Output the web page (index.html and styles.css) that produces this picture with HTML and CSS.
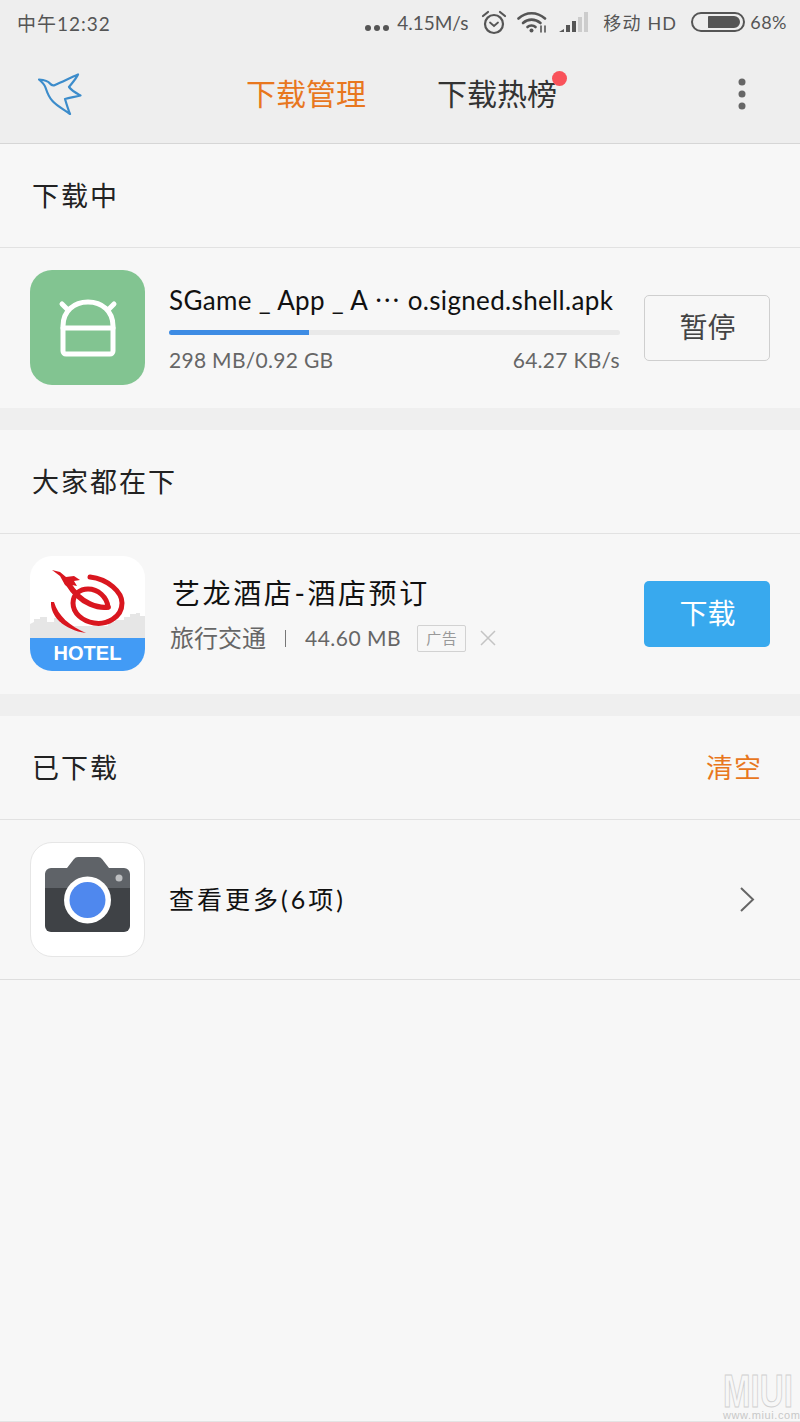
FILE: index.html
```html
<!DOCTYPE html>
<html lang="zh-CN">
<head>
  <meta charset="UTF-8">
  <meta name="viewport" content="width=device-width, initial-scale=1.0">
  <title>下载管理</title>
  <link rel="stylesheet" href="styles.css">
</head>
<body>
<div class="page">

  <header class="top">
    <div class="status">
      <div class="time">中午12:32</div>
      <div class="status-right">
        <svg class="more-dots" width="24" height="6" viewBox="0 0 24 6"><circle cx="3" cy="3" r="3"/><circle cx="12" cy="3" r="3"/><circle cx="21" cy="3" r="3"/></svg>
        <span class="speed">4.15M/s</span>
        <svg class="alarm" width="26" height="25" viewBox="0 0 26 25" fill="none" stroke="#555" stroke-linecap="round"><circle cx="13" cy="14" r="9" stroke-width="2.2"/><path d="M9 12.5l4 3.5 4-3.5" stroke-width="1.8"/><path d="M2 6l5-4M24 6l-5-4" stroke-width="2.2"/></svg>
        <svg class="wifi" width="31" height="22" viewBox="0 0 31 22" fill="none" stroke="#555" stroke-width="2.6" stroke-linecap="round"><path d="M1.5 7.5C9 0.5 20 0.5 28 7.5"/><path d="M6 12C11 7.500 18 7.500 23.500 12"/><path d="M10.500 16C12.500 14 16.500 14 18.500 16"/><circle cx="14.500" cy="19.500" r="2" fill="#555" stroke="none"/><path d="M24 15v6M28 15v6" stroke-width="1.6"/></svg>
        <svg class="signal" width="29" height="20" viewBox="0 0 29 20"><path d="M0 20l5-3v3z" fill="#555"/><rect x="7" y="13" width="4" height="7" fill="#555"/><rect x="13" y="9" width="4" height="11" fill="#555"/><rect x="19" y="5" width="4" height="15" fill="#ccc"/><rect x="25" y="0" width="4" height="20" fill="#ccc"/></svg>
        <span class="carrier">移动 HD</span>
        <div class="battery"><div class="battery-level"></div></div>
        <span class="percent">68%</span>
      </div>
    </div>
    <nav class="tabs">
      <svg class="bird" width="46" height="44" viewBox="0 0 46 44" fill="none" stroke="#3c8ccb" stroke-width="2.2" stroke-linejoin="round" stroke-linecap="round"><path d="M1 6.500C6 7 10 8 12 10.500C13.500 12.500 15 13 17 12C25 8.500 33 4.500 40 1.500C38 6 34 10 31 14C34 18 38 20 42.500 22.500C37 24 32 24.500 27 26C28.500 31 30 36 32 41C26 36.500 19 33 14.500 28C10.500 24 9 19 7.500 14.500C6.500 11.500 4 9 1 6.500Z"/></svg>
      <div class="tab tab-active">下载管理</div>
      <div class="tab tab-hot">下载热榜<span class="red-dot"></span></div>
      <svg class="menu" width="8" height="32" viewBox="0 0 8 32" fill="#666"><circle cx="4" cy="4" r="3.500"/><circle cx="4" cy="16" r="3.500"/><circle cx="4" cy="28" r="3.500"/></svg>
    </nav>
  </header>

  <section class="block">
    <div class="block-head"><h2>下载中</h2></div>
    <div class="row">
      <div class="app-icon icon-apk">
        <svg width="115" height="115" viewBox="0 0 115 115" fill="none" stroke="#fff" stroke-width="5" stroke-linecap="round" stroke-linejoin="round"><path d="M33 56C33 41 44 32 58 32C72 32 83 41 83 56V81A3 3 0 0 1 80 84H36A3 3 0 0 1 33 81Z"/><path d="M33 58H83"/><path d="M32 34L38 40M84 34L78 40"/></svg>
      </div>
      <div class="info">
        <div class="name name-file">SGame _ App _ A ⋯ o.signed.shell.apk</div>
        <div class="progress"><div class="progress-bar" style="width: 31%"></div></div>
        <div class="meta meta-split"><span>298 MB/0.92 GB</span><span>64.27 KB/s</span></div>
      </div>
      <button class="btn">暂停</button>
    </div>
  </section>

  <section class="block">
    <div class="block-head"><h2>大家都在下</h2></div>
    <div class="row">
      <div class="app-icon icon-hotel">
        <svg class="hotel-art" width="115" height="82" viewBox="0 0 115 82" fill="none">
          <path d="M0 82V68L4 66V63H10V61H17V66H24V62H30V67H38V70H78V66H85V64H94V61H100V58H106V57H110V60H115V82Z" fill="#e6e6e6"/>
          <path d="M60 21C78 23 92 36 92 47C92 62 76 69 64 67C52 65 43 57 43 47C43 38 50 33 58 33C68 33 77 41 78 51" stroke="#d9161f" stroke-width="5" stroke-linecap="round"/>
          <path d="M37 26C42 34 50 44 60 48C67 51 73 52 78 51" stroke="#d9161f" stroke-width="5.500" stroke-linecap="round"/>
          <path d="M22 14L30 16L36 21L44 20L50 24L44 25L47 30L42 29L41 33L35 29L30 20Z" fill="#d9161f"/>
          <path d="M21 46C20 60 34 74 56 77C40 70 28 60 24 46Z" fill="#d9161f"/>
        </svg>
        <div class="hotel-band">HOTEL</div>
      </div>
      <div class="info info-ad">
        <div class="name name-ad">艺龙酒店-酒店预订</div>
        <div class="meta meta-ad">
          <span class="category">旅行交通</span>
          <span class="sep"></span>
          <span class="ad-size">44.60 MB</span>
          <span class="ad-tag">广告</span>
          <svg class="close" width="16" height="16" viewBox="0 0 16 16" stroke="#c4c4c4" stroke-width="1.500"><path d="M1 1L15 15M15 1L1 15"/></svg>
        </div>
      </div>
      <button class="btn btn-blue">下载</button>
    </div>
  </section>

  <section class="block block-last">
    <div class="block-head block-head-split"><h2>已下载</h2><a class="clear">清空</a></div>
    <div class="row row-more">
      <div class="app-icon icon-camera">
        <svg width="115" height="115" viewBox="0 0 115 115">
          <path d="M15 46V32A6 6 0 0 1 21 26H37L44 17A5 5 0 0 1 48 15H68A5 5 0 0 1 72 17L79 26H94A6 6 0 0 1 100 32V46Z" fill="#5f6368"/>
          <path d="M15 46H100V84A6 6 0 0 1 94 90H21A6 6 0 0 1 15 84Z" fill="#3f4246"/>
          <circle cx="57.500" cy="58" r="23.500" fill="#fff"/>
          <circle cx="57.500" cy="58" r="18" fill="#4f88ee"/>
          <circle cx="89" cy="36" r="3.500" fill="#bdbfc1"/>
        </svg>
      </div>
      <div class="more-text">查看更多(6项)</div>
      <svg class="chevron" width="16" height="27" viewBox="0 0 16 27" fill="none" stroke="#666" stroke-width="2"><path d="M2 2L14 13.500L2 25"/></svg>
    </div>
  </section>

  <div class="watermark">
    <div class="wm-logo">MIUI</div>
    <div class="wm-url">www.miui.com</div>
  </div>

</div>
</body>
</html>
```

FILE: styles.css
```css
html, body {
  margin: 0;
  padding: 0;
}

body {
  font-family: "Lato", "Noto Sans CJK SC", sans-serif;
  background-color: #f7f7f7;
}

.page {
  position: relative;
  box-sizing: border-box;
  width: 800px;
  height: 1422px;
  overflow: hidden;
  background-color: #f7f7f7;
  border-bottom: 1px solid #e4e4e4;
}

/* top area */
.top {
  height: 143px;
  background-color: #eeeeee;
  border-bottom: 1px solid #d6d6d6;
}

.status {
  display: flex;
  justify-content: space-between;
  align-items: center;
  height: 44px;
  padding: 0 13px 0 17px;
  color: #555555;
  font-size: 19px;
}

.time {
  letter-spacing: 1px;
}

.status-right {
  display: flex;
  align-items: center;
}

.more-dots {
  fill: #555555;
  margin-top: 12px;
  margin-right: 8px;
}

.speed {
  width: 72px;
  font-size: 19px;
  margin-right: 12px;
}

.alarm {
  margin-right: 10px;
}

.wifi {
  margin-right: 11px;
}

.signal {
  margin-right: 15px;
}

.carrier {
  width: 78px;
  margin-right: 10px;
  white-space: nowrap;
  font-size: 18px;
  letter-spacing: 1.200px;
}

.battery {
  box-sizing: border-box;
  width: 54px;
  height: 20px;
  padding: 2px 3px;
  margin-right: 5px;
  border: 2px solid #555555;
  border-radius: 10px;
  display: flex;
  justify-content: flex-end;
}

.battery-level {
  width: 32px;
  background-color: #555555;
  border-radius: 1px 7px 7px 1px;
}

.percent {
  font-size: 18px;
  letter-spacing: .5px;
}

.tabs {
  display: flex;
  align-items: center;
  height: 99px;
  padding-left: 38px;
}

.bird {
  margin-right: 162px;
  margin-top: 2px;
}

.tab {
  position: relative;
  margin-top: -4px;
  font-size: 30px;
  color: #333333;
  white-space: nowrap;
}

.tab-active {
  color: #e8771e;
  margin-right: 71px;
}

.red-dot {
  position: absolute;
  top: 1px;
  right: -10px;
  width: 15px;
  height: 15px;
  border-radius: 50%;
  background-color: #f9525a;
}

.menu {
  margin-left: 181px;
}

/* sections */
.block {
  background-color: #f7f7f7;
  border-bottom: 22px solid #efefef;
}

.block-last {
  border-bottom: 1px solid #dedede;
}

.block-head {
  display: flex;
  align-items: center;
  box-sizing: border-box;
  height: 104px;
  padding: 0 38px 2px 32px;
  border-bottom: 1px solid #e2e2e2;
}

.block-head-split {
  justify-content: space-between;
}

.block-head h2 {
  margin: 0;
  font-size: 27px;
  font-weight: 400;
  letter-spacing: 2px;
  color: #222222;
}

.clear {
  font-size: 27px;
  letter-spacing: 1px;
  color: #e8771e;
}

.row {
  display: flex;
  align-items: center;
  box-sizing: border-box;
  height: 160px;
  padding: 0 30px 1px;
}

.row-more {
  height: 159px;
}

.app-icon {
  position: relative;
  flex: none;
  box-sizing: border-box;
  width: 115px;
  height: 115px;
  border-radius: 22px;
  overflow: hidden;
}

.app-icon svg {
  display: block;
}

.icon-apk {
  background-color: #82c491;
}

.icon-hotel {
  background-color: #ffffff;
}

.hotel-band {
  height: 33px;
  background-color: #429bf5;
  color: #ffffff;
  font-family: "Liberation Sans", sans-serif;
  font-weight: 700;
  font-size: 20px;
  line-height: 30px;
  text-align: center;
}

.icon-camera {
  background-color: #ffffff;
  border: 1px solid #e6e6e6;
}

.icon-camera svg {
  margin: -1px;
}

.info {
  flex: 1;
  min-width: 0;
  margin-left: 24px;
  margin-right: 24px;
}

.name {
  color: #111111;
  white-space: nowrap;
}

.name-file {
  font-size: 26px;
  line-height: 32px;
  letter-spacing: .34px;
  margin-top: 3px;
  margin-bottom: 14px;
}

.name-ad {
  font-size: 28px;
  line-height: 36px;
  letter-spacing: 2.600px;
  margin-left: 3px;
  margin-bottom: 13px;
}

.progress {
  height: 5px;
  background-color: #e9e9e9;
  border-radius: 3px;
  overflow: hidden;
}

.progress-bar {
  height: 100%;
  background-color: #3e8ce4;
}

.meta {
  color: #666666;
  font-size: 21px;
  line-height: 28px;
  letter-spacing: .3px;
}

.meta-split {
  display: flex;
  justify-content: space-between;
  margin-top: 11px;
}

.meta-ad {
  display: flex;
  align-items: center;
  margin-top: 5px;
  margin-left: 1px;
}

.category {
  font-size: 24px;
  letter-spacing: 0;
}

.sep {
  width: 1px;
  height: 17px;
  margin: 0 19px;
  background-color: #777777;
}

.ad-size {
  letter-spacing: .5px;
}

.ad-tag {
  box-sizing: border-box;
  width: 49px;
  height: 27px;
  margin-left: 16px;
  border: 1px solid #d2d2d2;
  border-radius: 2px;
  color: #999999;
  font-size: 15px;
  line-height: 25px;
  text-align: center;
}

.close {
  margin-left: 14px;
}

.btn {
  flex: none;
  box-sizing: border-box;
  width: 126px;
  height: 66px;
  border: 1px solid #cfcfcf;
  border-radius: 5px;
  background-color: #f7f7f7;
  color: #444444;
  font-family: inherit;
  font-size: 28px;
  padding: 0 0 3px 1px;
}

.btn-blue {
  border: none;
  background-color: #38a9ee;
  color: #ffffff;
}

.more-text {
  flex: 1;
  margin-left: 24px;
  margin-bottom: 3px;
  font-size: 25px;
  letter-spacing: 3px;
  color: #111111;
}

.chevron {
  margin-right: 15px;
}

/* corner watermark */
.watermark {
  position: absolute;
  left: 723px;
  top: 1373px;
  width: 76px;
}

.wm-logo {
  width: 100px;
  font-family: "Liberation Sans", sans-serif;
  font-weight: 700;
  font-size: 46px;
  line-height: 37px;
  color: #f7f7f7;
  -webkit-text-stroke: 1px #d0d0d0;
  transform: scaleX(.72);
  transform-origin: left top;
}

.wm-url {
  font-family: "Liberation Sans", sans-serif;
  font-size: 11px;
  line-height: 10px;
  letter-spacing: .6px;
  color: #c8c8c8;
  white-space: nowrap;
}
```
